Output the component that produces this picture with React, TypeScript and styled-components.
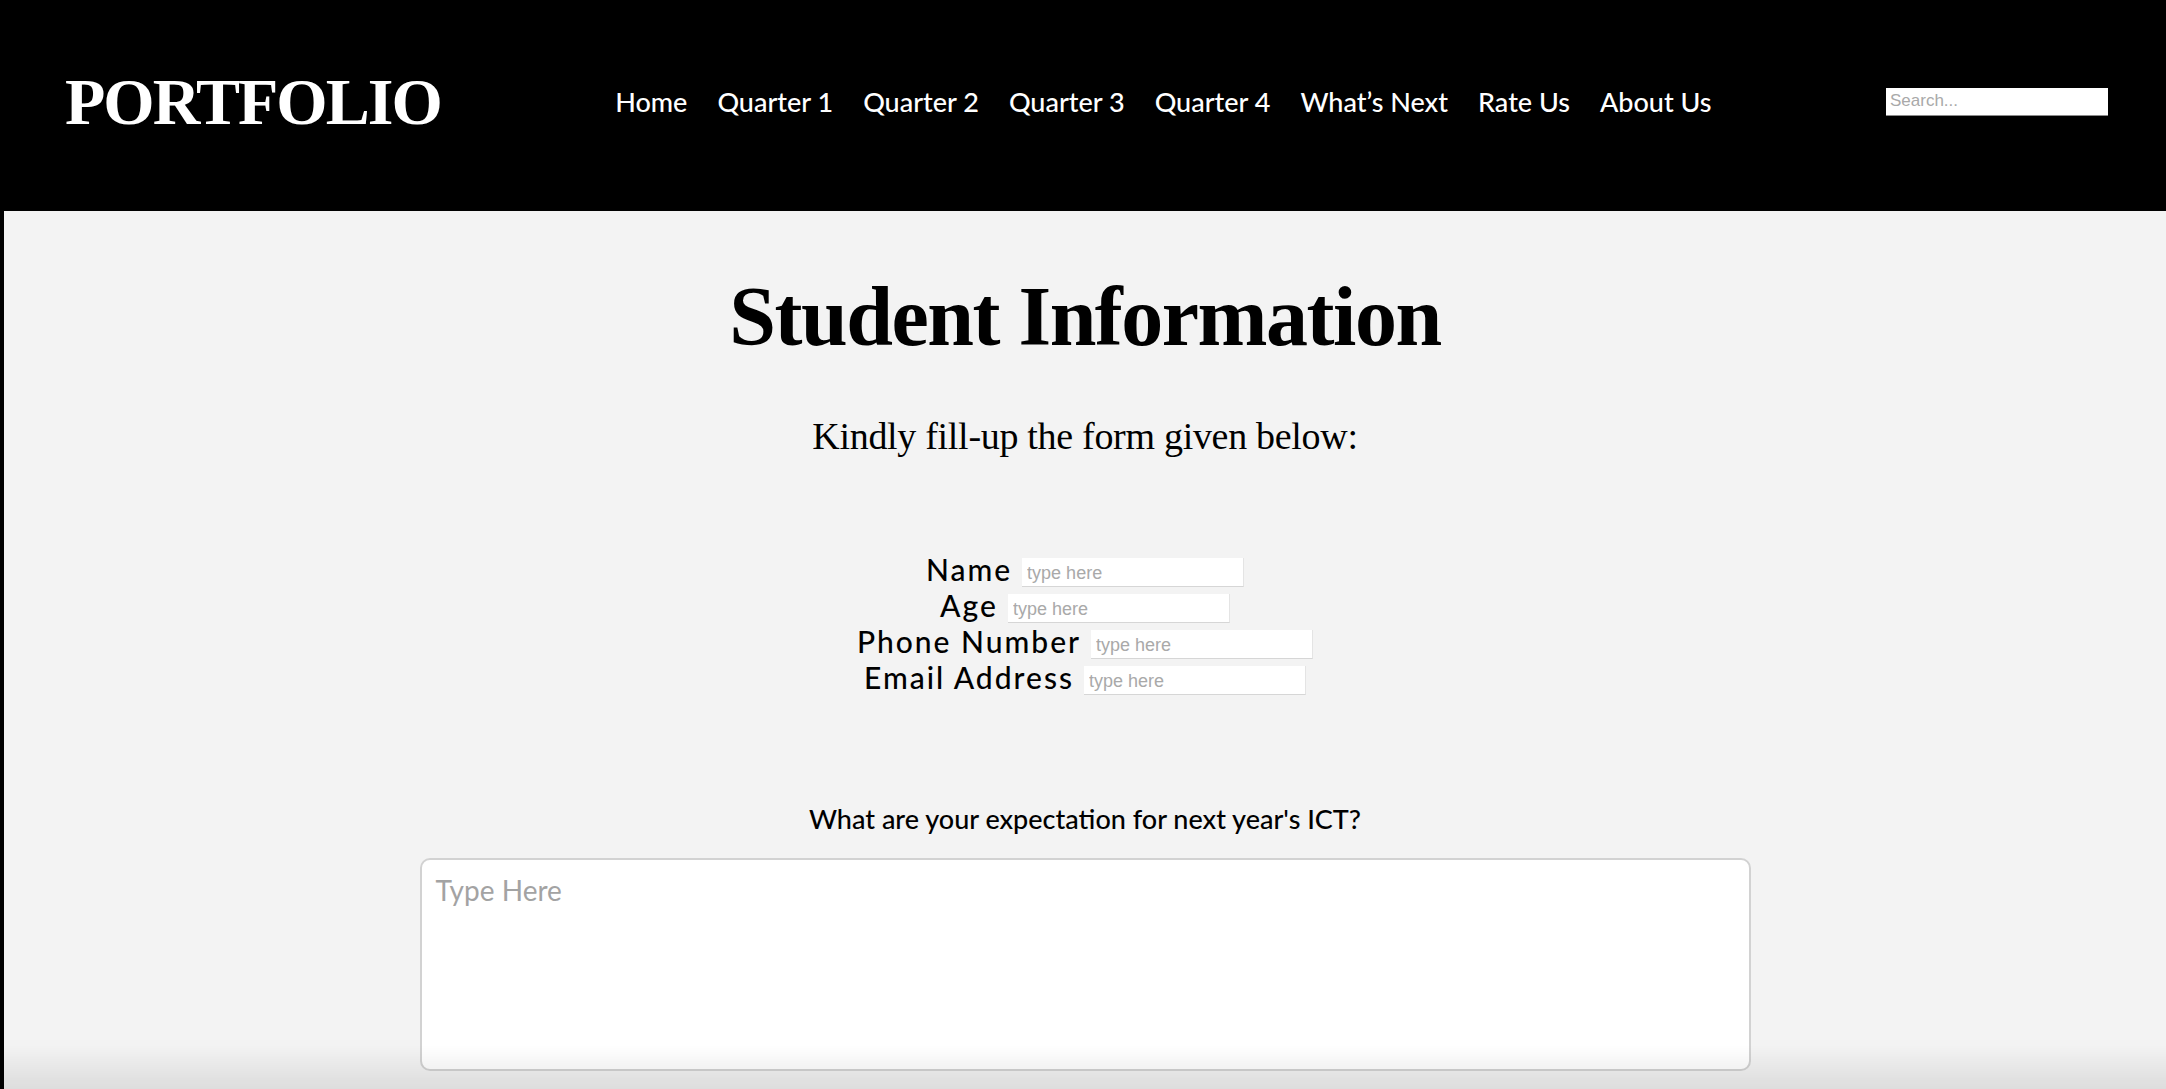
import React from "react";
import styled, { createGlobalStyle } from "styled-components";

const GlobalStyle = createGlobalStyle`
    html, body {
        margin: 0;
        padding: 0;
    }

    body {
        background: #000;
        font-family: "Lato", "Liberation Sans", sans-serif;
    }

    * {
        box-sizing: border-box;
    }
`;

const Pagina = styled.div`
    min-height: 100vh;
    margin-left: 4px;
    background: #f3f3f3;
    display: flex;
    flex-direction: column;
`;

const Cabecalho = styled.header`
    height: 211px;
    background: #000;
    display: flex;
    align-items: center;
    justify-content: space-between;
    padding: 0 58px 8px 61px;
`;

const Logo = styled.div`
    color: #fff;
    font-family: "Liberation Serif", "DejaVu Serif", serif;
    font-weight: 700;
    font-size: 66px;
    letter-spacing: -2px;
    line-height: 1;
`;

const Menu = styled.nav`
    display: flex;
    gap: 30px;
`;

const ItemMenu = styled.a`
    color: #fff;
    font-size: 27px;
    font-weight: 500;
    text-decoration: none;
    line-height: 1;
`;

const Busca = styled.input`
    width: 222px;
    height: 28px;
    border: none;
    border-bottom: 1px solid #8a8a8a;
    padding: 0 4px;
    background: #fff;
    font-family: "Liberation Sans", Arial, sans-serif;
    font-size: 17px;

    &::placeholder {
        color: #a9a9a9;
    }
`;

const Conteudo = styled.main`
    display: flex;
    flex-direction: column;
    align-items: center;
    padding-bottom: 40px;
`;

const Titulo = styled.h1`
    margin: 64px 0 0;
    font-family: "Liberation Serif", "DejaVu Serif", serif;
    font-weight: 700;
    font-size: 84px;
    letter-spacing: -1.5px;
    line-height: 1;
    color: #000;
`;

const Subtitulo = styled.p`
    margin: 58px 0 0;
    font-family: "Liberation Serif", "DejaVu Serif", serif;
    font-size: 38px;
    letter-spacing: -0.3px;
    line-height: 1;
    color: #000;
`;

const Formulario = styled.form`
    margin-top: 99px;
    display: flex;
    flex-direction: column;
    align-items: center;
`;

const Linha = styled.div`
    height: 36px;
    display: flex;
    align-items: center;
    justify-content: center;
    gap: 10px;
`;

const Rotulo = styled.label`
    font-size: 30px;
    font-weight: 500;
    letter-spacing: 2px;
    line-height: 30px;
    padding-bottom: 6px;
    color: #000;
`;

const Campo = styled.input`
    width: 222px;
    height: 29px;
    border: none;
    border-bottom: 1px solid #d6d6d6;
    border-right: 1px solid #e4e4e4;
    background: #fff;
    padding: 3px 5px 0;
    font-family: "Liberation Sans", Arial, sans-serif;
    font-size: 18px;

    &::placeholder {
        color: #a9a9a9;
    }
`;

const Pergunta = styled.p`
    margin: 107px 0 0;
    font-size: 27px;
    font-weight: 500;
    line-height: 1;
    color: #000;
`;

const AreaTexto = styled.textarea`
    margin-top: 26px;
    width: 1331px;
    height: 213px;
    border: 2px solid #d2d2d2;
    border-radius: 10px;
    background: #fff;
    padding: 13px 14px;
    resize: none;
    font-family: "Lato", "Liberation Sans", sans-serif;
    font-size: 28px;

    &::placeholder {
        color: #a3a3a3;
    }
`;

const SombraInferior = styled.div`
    position: fixed;
    left: 0;
    right: 0;
    bottom: 0;
    height: 44px;
    pointer-events: none;
    background: linear-gradient(to bottom, rgba(0, 0, 0, 0), rgba(0, 0, 0, 0.09));
`;

const menu = [
    "Home",
    "Quarter 1",
    "Quarter 2",
    "Quarter 3",
    "Quarter 4",
    "What’s Next",
    "Rate Us",
    "About Us",
];

const campos = ["Name", "Age", "Phone Number", "Email Address"];

export default function App() {
    return (
        <>
            <GlobalStyle />
            <Pagina>
                <Cabecalho>
                    <Logo>PORTFOLIO</Logo>
                    <Menu>
                        {menu.map((item) => (
                            <ItemMenu key={item} href="#">
                                {item}
                            </ItemMenu>
                        ))}
                    </Menu>
                    <Busca type="text" placeholder="Search..." />
                </Cabecalho>
                <Conteudo>
                    <Titulo>Student Information</Titulo>
                    <Subtitulo>Kindly fill-up the form given below:</Subtitulo>
                    <Formulario>
                        {campos.map((campo) => (
                            <Linha key={campo}>
                                <Rotulo>{campo}</Rotulo>
                                <Campo type="text" placeholder="type here" />
                            </Linha>
                        ))}
                    </Formulario>
                    <Pergunta>What are your expectation for next year's ICT?</Pergunta>
                    <AreaTexto placeholder="Type Here" />
                </Conteudo>
            </Pagina>
            <SombraInferior />
        </>
    );
}
